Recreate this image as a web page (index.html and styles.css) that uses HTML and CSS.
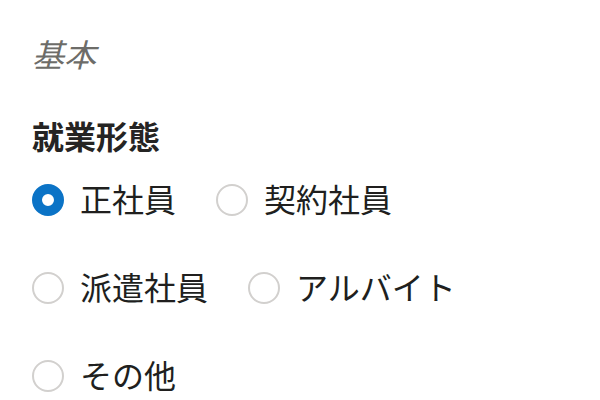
FILE: index.html
```html
<!DOCTYPE html>
<html lang="ja">
<head>
<meta charset="utf-8">
<link rel="stylesheet" href="styles.css">
</head>
<body>
<div class="page">
  <div class="section-title">基本</div>
  <fieldset class="group">
    <legend class="group-label">就業形態</legend>
    <div class="options">
      <label class="option"><span class="radio checked"></span><span class="text">正社員</span></label>
      <label class="option"><span class="radio"></span><span class="text">契約社員</span></label>
      <label class="option"><span class="radio"></span><span class="text">派遣社員</span></label>
      <label class="option"><span class="radio"></span><span class="text">アルバイト</span></label>
      <label class="option"><span class="radio"></span><span class="text">その他</span></label>
    </div>
  </fieldset>
</div>
</body>
</html>
```

FILE: styles.css
```css
html, body {
  margin: 0;
  padding: 0;
  background: #ffffff;
}
body {
  font-family: "Noto Sans CJK JP", "Noto Sans", sans-serif;
  color: #201f1e;
}
.page {
  padding: 29px 32px 0 32px;
  width: 536px;
}
.section-title {
  font-size: 32px;
  line-height: 48px;
  font-style: italic;
  color: #6d6c68;
}
.group {
  border: 0;
  margin: 34px 0 0 0;
  padding: 0;
  min-width: 0;
}
.group-label {
  padding: 0;
  font-size: 32px;
  line-height: 48px;
  font-weight: bold;
  color: #252423;
}
.options {
  display: flex;
  flex-wrap: wrap;
  row-gap: 40px;
  margin-top: 17px;
}
.option {
  display: flex;
  align-items: center;
  gap: 16px;
  margin-right: 40px;
  height: 48px;
}
.radio {
  box-sizing: border-box;
  width: 32px;
  height: 32px;
  border-radius: 50%;
  border: 2px solid #d2d0ce;
  background: #ffffff;
  flex: none;
}
.radio.checked {
  border: 10px solid #0b73c6;
}
.text {
  font-size: 32px;
  line-height: 44px;
  padding-bottom: 4px;
  color: #201f1e;
}
```
